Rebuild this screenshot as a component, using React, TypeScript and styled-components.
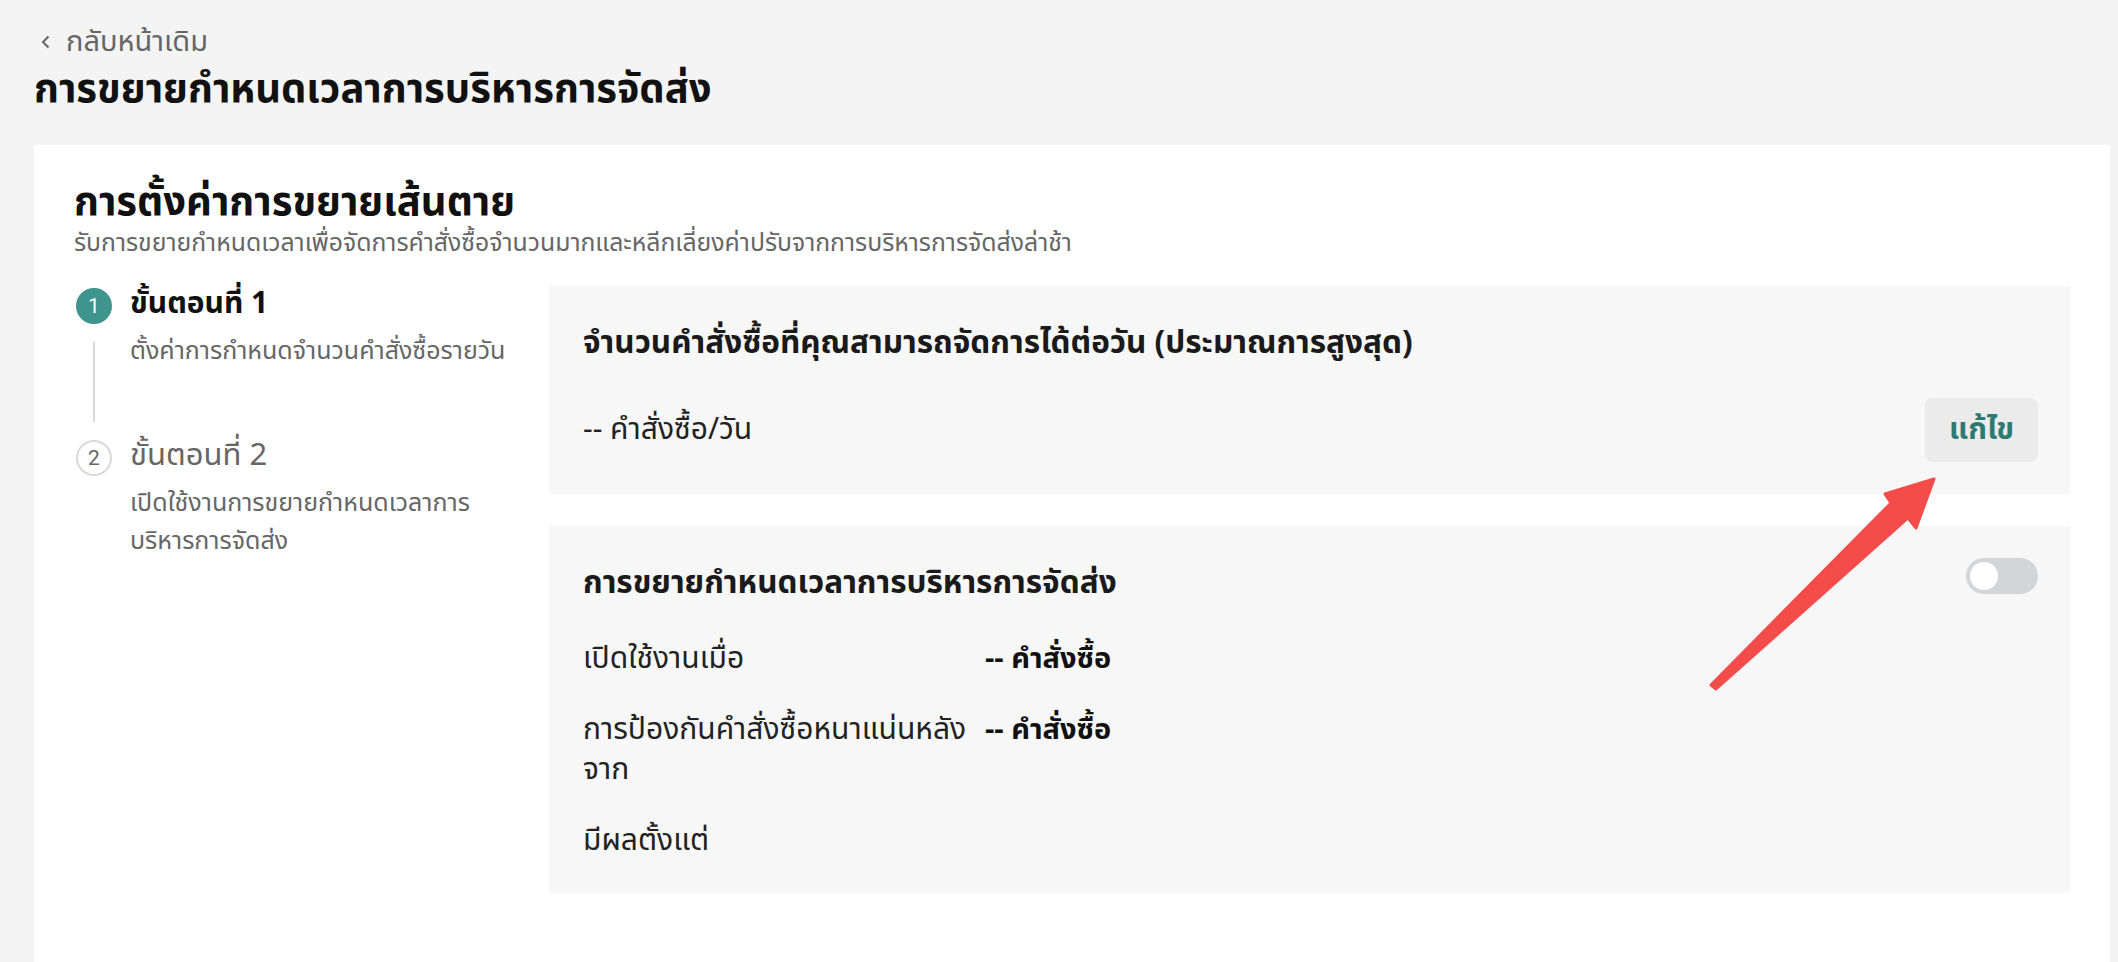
import React from 'react';
import styled, { createGlobalStyle } from 'styled-components';

const FONT = `"Noto Sans Thai", "Noto Sans Thai UI", "Noto Sans", "Liberation Sans", sans-serif`;

const GlobalStyle = createGlobalStyle`
	html, body {
		margin: 0;
		padding: 0;
		background: #f4f4f4;
		font-family: ${FONT};
		color: #222;
	}
	* {
		box-sizing: border-box;
	}
`;

const steps = [
	{
		no: 1,
		title: 'ขั้นตอนที่ 1',
		desc: 'ตั้งค่าการกำหนดจำนวนคำสั่งซื้อรายวัน',
	},
	{
		no: 2,
		title: 'ขั้นตอนที่ 2',
		desc: 'เปิดใช้งานการขยายกำหนดเวลาการบริหารการจัดส่ง',
	},
];

const rules = [
	{ label: 'เปิดใช้งานเมื่อ', value: '-- คำสั่งซื้อ' },
	{ label: 'การป้องกันคำสั่งซื้อหนาแน่นหลังจาก', value: '-- คำสั่งซื้อ' },
	{ label: 'มีผลตั้งแต่', value: '' },
];

const App = () => {
	const [enabled, setEnabled] = React.useState(false);

	return (
		<Page>
			<GlobalStyle />
			<BackLink href="#">
				<svg width="10" height="14" viewBox="0 0 10 14">
					<path
						d="M7.5 1.5 L2 7 L7.5 12.5"
						fill="none"
						stroke="#666"
						strokeWidth="2"
					/>
				</svg>
				<span>กลับหน้าเดิม</span>
			</BackLink>
			<PageTitle>การขยายกำหนดเวลาการบริหารการจัดส่ง</PageTitle>

			<Card>
				<CardTitle>การตั้งค่าการขยายเส้นตาย</CardTitle>
				<CardSubtitle>
					รับการขยายกำหนดเวลาเพื่อจัดการคำสั่งซื้อจำนวนมากและหลีกเลี่ยงค่าปรับจากการบริหารการจัดส่งล่าช้า
				</CardSubtitle>

				<Body>
					<Steps>
						{steps.map((s, i) => (
							<Step key={s.no} $last={i === steps.length - 1}>
								<StepRail>
									<StepDot $active={i === 0}>{s.no}</StepDot>
									{i < steps.length - 1 ? <StepLine /> : null}
								</StepRail>
								<StepText>
									<StepTitle $active={i === 0}>{s.title}</StepTitle>
									<StepDesc>{s.desc}</StepDesc>
								</StepText>
							</Step>
						))}
					</Steps>

					<Panels>
						<Panel>
							<PanelTitle>
								จำนวนคำสั่งซื้อที่คุณสามารถจัดการได้ต่อวัน (ประมาณการสูงสุด)
							</PanelTitle>
							<PanelRow>
								<span>-- คำสั่งซื้อ/วัน</span>
								<EditButton>แก้ไข</EditButton>
							</PanelRow>
						</Panel>

						<Panel>
							<PanelHead>
								<PanelTitle>การขยายกำหนดเวลาการบริหารการจัดส่ง</PanelTitle>
								<Toggle
									$on={enabled}
									onClick={() => setEnabled(!enabled)}
								>
									<span />
								</Toggle>
							</PanelHead>
							<RuleGrid>
								{rules.map((r) => (
									<React.Fragment key={r.label}>
										<RuleLabel>{r.label}</RuleLabel>
										<RuleValue>{r.value}</RuleValue>
									</React.Fragment>
								))}
							</RuleGrid>
						</Panel>
					</Panels>
				</Body>
			</Card>

			<Pointer viewBox="0 0 260 240">
				<polygon
					points="234,9 185,24 191,33 11,215 16,219 208,48 216,58"
					fill="#f44c4a"
					stroke="#f44c4a"
					strokeWidth="3"
					strokeLinejoin="round"
				/>
			</Pointer>
		</Page>
	);
};

export default App;

const Page = styled.div`
	position: relative;
	min-height: 962px;
	padding: 22px 8px 0 34px;
	overflow: hidden;
`;

const BackLink = styled.a`
	display: inline-flex;
	align-items: center;
	gap: 15px;
	margin-left: 7px;
	height: 40px;
	font-size: 29px;
	color: #666;
	text-decoration: none;
`;

const PageTitle = styled.h1`
	margin: 4px 0 0 0;
	font-size: 40px;
	line-height: 48px;
	font-weight: 700;
	color: #111;
`;

const Card = styled.div`
	margin-top: 31px;
	background: #fff;
	padding: 30px 40px 80px 40px;
	min-height: 820px;
`;

const CardTitle = styled.h2`
	margin: 0;
	font-size: 40px;
	line-height: 56px;
	font-weight: 700;
	color: #111;
`;

const CardSubtitle = styled.p`
	margin: 0;
	font-size: 24.8px;
	line-height: 26px;
	color: #666;
`;

const Body = styled.div`
	display: flex;
	align-items: flex-start;
	gap: 35px;
	margin-top: 29px;
`;

const Steps = styled.div`
	width: 440px;
	flex-shrink: 0;
	padding-left: 2px;
	display: flex;
	flex-direction: column;
`;

const Step = styled.div<{ $last: boolean }>`
	display: flex;
	gap: 18px;
	min-height: ${(p) => (p.$last ? 'auto' : '152px')};
`;

const StepRail = styled.div`
	display: flex;
	flex-direction: column;
	align-items: center;
	width: 36px;
	flex-shrink: 0;
	padding-top: 2px;
`;

const StepDot = styled.div<{ $active: boolean }>`
	width: 36px;
	height: 36px;
	border-radius: 50%;
	display: flex;
	align-items: center;
	justify-content: center;
	font-family: Roboto, "Liberation Sans", sans-serif;
	font-size: 21px;
	background: ${(p) => (p.$active ? '#3f948d' : 'transparent')};
	color: ${(p) => (p.$active ? '#fff' : '#666')};
	border: 2px solid ${(p) => (p.$active ? '#3f948d' : '#d9d9d9')};
`;

const StepLine = styled.div`
	width: 2px;
	height: 80px;
	margin-top: 18px;
	background: #d9d9d9;
`;

const StepText = styled.div`
	flex: 1;
	display: flex;
	flex-direction: column;
`;

const StepTitle = styled.div<{ $active: boolean }>`
	font-size: ${(p) => (p.$active ? '30px' : '31px')};
	line-height: 36px;
	font-weight: ${(p) => (p.$active ? 700 : 400)};
	color: ${(p) => (p.$active ? '#111' : '#666')};
`;

const StepDesc = styled.div`
	margin-top: 10px;
	font-size: 25px;
	line-height: 38px;
	color: #666;
`;

const Panels = styled.div`
	flex: 1;
	display: flex;
	flex-direction: column;
	gap: 32px;
`;

const Panel = styled.div`
	background: #f7f7f7;
	padding: 36px 32px 32px 34px;
`;

const PanelHead = styled.div`
	display: flex;
	align-items: flex-start;
	justify-content: space-between;
`;

const PanelTitle = styled.div`
	font-size: 31.5px;
	line-height: 44px;
	font-weight: 700;
	color: #1a1a1a;
`;

const PanelRow = styled.div`
	display: flex;
	align-items: center;
	justify-content: space-between;
	margin-top: 32px;
	font-size: 30px;
	color: #222;
`;

const EditButton = styled.button`
	width: 113px;
	height: 64px;
	border: none;
	border-radius: 8px;
	background: #ebebeb;
	color: #2e7a72;
	font-family: ${FONT};
	font-size: 30px;
	font-weight: 700;
	cursor: pointer;
`;

const Toggle = styled.button<{ $on: boolean }>`
	width: 72px;
	height: 36px;
	margin-top: -4px;
	border: none;
	border-radius: 18px;
	padding: 4px;
	background: ${(p) => (p.$on ? '#3f948d' : '#d4d5d7')};
	display: flex;
	flex-shrink: 0;
	justify-content: ${(p) => (p.$on ? 'flex-end' : 'flex-start')};
	cursor: pointer;
	> span {
		width: 28px;
		height: 28px;
		border-radius: 50%;
		background: #fff;
	}
`;

const RuleGrid = styled.div`
	display: grid;
	grid-template-columns: 402px 1fr;
	row-gap: 31px;
	margin-top: 33px;
	font-size: 30px;
	line-height: 40px;
`;

const RuleLabel = styled.div`
	color: #222;
`;

const RuleValue = styled.div`
	font-size: 29px;
	font-weight: 700;
	color: #111;
`;

const Pointer = styled.svg`
	position: absolute;
	left: 1700px;
	top: 470px;
	width: 260px;
	height: 240px;
	pointer-events: none;
`;
